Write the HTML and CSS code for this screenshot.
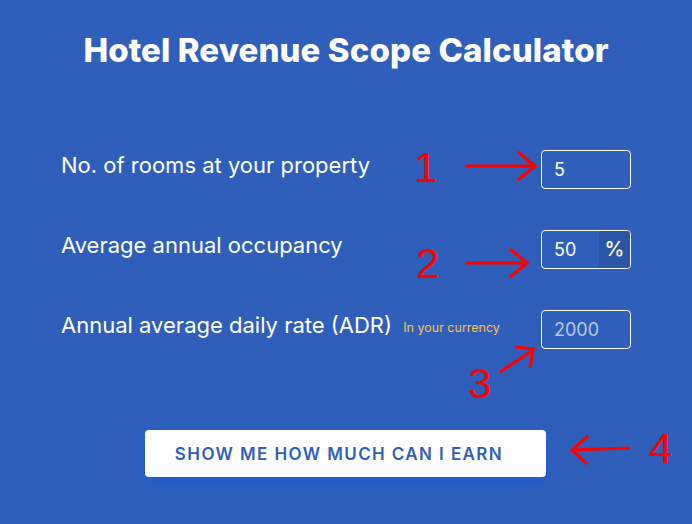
FILE: index.html
```html
<!DOCTYPE html>
<html>
<head>
<meta charset="utf-8">
<link rel="stylesheet" href="styles.css">
</head>
<body>
<div class="page">
  <h1 class="title">Hotel Revenue Scope Calculator</h1>
  <div class="form">
    <div class="row">
      <label class="label">No. of rooms at your property</label>
      <div class="field"><span class="value">5</span></div>
    </div>
    <div class="row">
      <label class="label">Average annual occupancy</label>
      <div class="field"><span class="value">50</span><span class="addon">%</span></div>
    </div>
    <div class="row">
      <label class="label">Annual average daily rate (ADR) <span class="hint">In your currency</span></label>
      <div class="field"><span class="value placeholder">2000</span></div>
    </div>
  </div>
  <div class="actions">
    <button class="btn">SHOW ME HOW MUCH CAN I EARN</button>
  </div>
  <svg class="annot" width="692" height="524" viewBox="0 0 692 524">
    <g stroke="#ff0000" stroke-width="3.2" fill="none" stroke-linecap="butt">
      <path d="M466 166 L533 166 M518 152 L535 166 L518 180"/>
      <path d="M466 263 L526 263 M510 249 L527 263 L510 277"/>
      <path d="M500 372 L533 350 M515 347 L533 349 L530 368"/>
      <path d="M630 448 L572 450 M588 436 L572 450 L587 464"/>
    </g>
    <g fill="#ff0000" font-family="'Liberation Sans', Arial, sans-serif" font-size="42">
      <text x="414" y="182">1</text>
      <text x="416" y="278">2</text>
      <text x="468" y="398">3</text>
      <text x="649" y="463">4</text>
    </g>
  </svg>
</div>
</body>
</html>
```
FILE: styles.css
```css
html, body {
  margin: 0;
  padding: 0;
  background: #2f5fba;
}
.page {
  position: relative;
  width: 692px;
  height: 524px;
  overflow: hidden;
  font-family: Inter, "Noto Sans", sans-serif;
  color: #ffffff;
}
.title {
  margin: 0;
  padding-top: 30px;
  text-align: center;
  font-family: Inter, sans-serif;
  font-weight: 800;
  font-size: 33px;
  line-height: 40px;
  letter-spacing: 0.1px;
}
.form {
  display: flex;
  flex-direction: column;
  gap: 41px;
  padding: 80px 61px 0 61px;
}
.row {
  display: flex;
  justify-content: space-between;
  align-items: flex-start;
  height: 39px;
}
.label {
  font-size: 22px;
  line-height: 30px;
  white-space: nowrap;
}
.hint {
  font-size: 12.5px;
  color: #f6c44f;
  margin-left: 5px;
  vertical-align: 1px;
}
.field {
  box-sizing: border-box;
  width: 90px;
  height: 39px;
  border: 1px solid #ffffff;
  border-radius: 4px;
  display: flex;
  align-items: stretch;
  overflow: hidden;
}
.value {
  flex: 1;
  padding-left: 12px;
  font-size: 18px;
  line-height: 37px;
}
.placeholder {
  color: #b9c9ea;
}
.addon {
  width: 31px;
  background: #2c55a8;
  text-align: center;
  font-size: 20px;
  font-weight: 500;
  line-height: 37px;
}
.actions {
  display: flex;
  justify-content: center;
  padding-top: 81px;
}
.btn {
  width: 401px;
  height: 47px;
  margin-left: -1px;
  padding: 0 13px 0 0;
  border: none;
  border-radius: 4px;
  background: #ffffff;
  color: #2f5fba;
  font-family: Inter, sans-serif;
  font-weight: 600;
  font-size: 17px;
  letter-spacing: 1.4px;
  box-shadow: 0 6px 14px rgba(20, 90, 220, 0.6);
  cursor: pointer;
}
.annot {
  position: absolute;
  left: 0;
  top: 0;
  pointer-events: none;
}
```
